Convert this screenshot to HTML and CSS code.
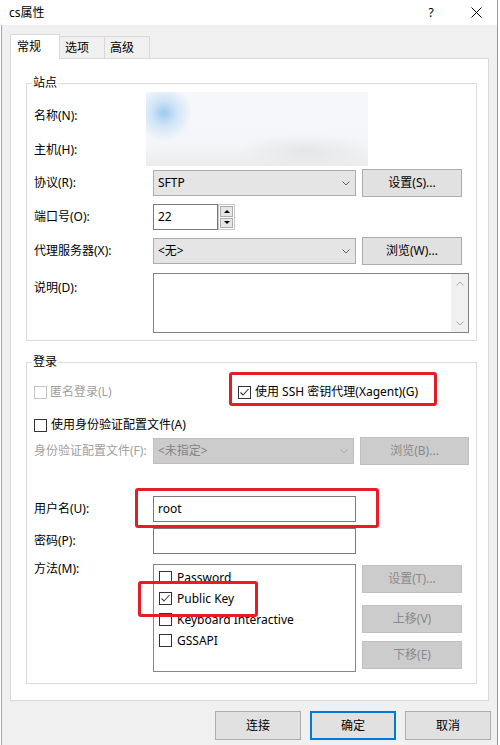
FILE: index.html
```html
<!DOCTYPE html>
<html>
<head>
	<title>cs属性</title>
	<meta charset="utf-8">
	<link rel="stylesheet" href="styles.css">
</head>
<body>
	<div class="window">
		<div class="titlebar">
			<span class="title">cs属性</span>
			<span class="help">?</span>
			<span class="close"><svg width="11" height="11" viewBox="0 0 11 11"><path d="M0.5 0.5L10.5 10.5M10.5 0.5L0.5 10.5" stroke="#000" stroke-width="1" fill="none"/></svg></span>
		</div>
		<div class="client">
			<div class="tabs">
				<div class="tab on">常规</div>
				<div class="tab">选项</div>
				<div class="tab">高级</div>
			</div>
			<div class="panel">
				<!-- 站点 -->
				<div class="group site">
					<div class="group-title">站点</div>
					<div class="site-top">
						<div class="label n1">名称(N):</div>
						<div class="blurred"></div>
						<div class="label n2">主机(H):</div>
					</div>
					<div class="row mt2">
						<div class="label">协议(R):</div>
						<div class="select"><span>SFTP</span><svg width="8" height="5" viewBox="0 0 8 5"><polyline points="0.5,0.5 4,4 7.5,0.5" stroke="#606060" fill="none"/></svg></div>
						<div class="btn">设置(S)...</div>
					</div>
					<div class="row mt6">
						<div class="label">端口号(O):</div>
						<div class="input port">22</div>
						<div class="spin">
							<div class="spin-b"><i class="tri-up"></i></div>
							<div class="spin-b"><i class="tri-down"></i></div>
						</div>
					</div>
					<div class="row mt6">
						<div class="label">代理服务器(X):</div>
						<div class="select"><span>&lt;无&gt;</span><svg width="8" height="5" viewBox="0 0 8 5"><polyline points="0.5,0.5 4,4 7.5,0.5" stroke="#606060" fill="none"/></svg></div>
						<div class="btn">浏览(W)...</div>
					</div>
					<div class="row-top desc-row">
						<div class="label desc-label">说明(D):</div>
						<div class="textarea">
							<div class="vscroll">
								<svg width="8" height="5" viewBox="0 0 8 5"><polyline points="0.5,4.5 4,1 7.5,4.5" stroke="#a6a6a6" fill="none"/></svg>
								<svg width="8" height="5" viewBox="0 0 8 5"><polyline points="0.5,0.5 4,4 7.5,0.5" stroke="#a6a6a6" fill="none"/></svg>
							</div>
						</div>
					</div>
				</div>

				<!-- 登录 -->
				<div class="group login">
					<div class="group-title">登录</div>
					<div class="checks">
						<div class="chk anon disabled"><i class="box"></i>匿名登录(L)</div>
						<div class="chk"><i class="box"><svg width="11" height="11" viewBox="0 0 11 11"><polyline points="1.5,5.5 4,8 9.5,2" stroke="#333" stroke-width="1.1" fill="none"/></svg></i>使用 SSH 密钥代理(Xagent)(G)</div>
					</div>
					<div class="checks mt13">
						<div class="chk"><i class="box"></i>使用身份验证配置文件(A)</div>
					</div>
					<div class="row mt2">
						<div class="label disabled">身份验证配置文件(F):</div>
						<div class="select off"><span>&lt;未指定&gt;</span><svg width="8" height="5" viewBox="0 0 8 5"><polyline points="0.5,0.5 4,4 7.5,0.5" stroke="#a8a8a8" fill="none"/></svg></div>
						<div class="btn off wide">浏览(B)...</div>
					</div>
					<div class="row field mt31">
						<div class="label">用户名(U):</div>
						<div class="input">root</div>
					</div>
					<div class="row field mt6">
						<div class="label">密码(P):</div>
						<div class="input"></div>
					</div>
					<div class="row-top method-row">
						<div class="label method-label">方法(M):</div>
						<div class="listbox">
							<div class="opt"><i class="box"></i>Password</div>
							<div class="opt"><i class="box"><svg width="11" height="11" viewBox="0 0 11 11"><polyline points="1.5,5.5 4,8 9.5,2" stroke="#444" stroke-width="1.1" fill="none"/></svg></i>Public Key</div>
							<div class="opt"><i class="box"></i>Keyboard Interactive</div>
							<div class="opt"><i class="box"></i>GSSAPI</div>
						</div>
						<div class="side-btns">
							<div class="btn off">设置(T)...</div>
							<div class="btn off up">上移(V)</div>
							<div class="btn off down">下移(E)</div>
						</div>
					</div>
				</div>
			</div>
			<div class="actions">
				<div class="btn act">连接</div>
				<div class="btn act default">确定</div>
				<div class="btn act">取消</div>
			</div>
		</div>

		<!-- 标注红框 -->
		<div class="mark m1"></div>
		<div class="mark m2"></div>
		<div class="mark m3"></div>
	</div>
</body>
</html>
```

FILE: styles.css
```css
*{margin: 0;padding: 0;box-sizing: border-box;}
body{background: #fff;font-family: "Noto Sans","Noto Sans CJK SC",sans-serif;font-size: 12px;color: #000;line-height: 16px;}
i{font-style: normal;}
.window{position: relative;width: 498px;height: 745px;border-right: 1px solid #9a9a9a;}

/* 标题栏 */
.titlebar{height: 25px;display: flex;align-items: center;background: #fff;}
.title{flex: 1;padding-left: 9px;}
.help{width: 16px;text-align: center;margin-right: 24px;}
.close{width: 26px;height: 25px;display: flex;align-items: center;justify-content: center;margin-right: 8px;}

.client{height: 720px;margin-left: 1px;border-left: 1px solid #a6a6a6;background: #f0f0f0;padding: 9px 0 0 8px;}

/* 选项卡 */
.tabs{display: flex;height: 24px;position: relative;z-index: 1;}
.tab{width: 46px;height: 22px;margin-top: 2px;border: 1px solid #d9d9d9;border-bottom: 0;background: #f0f0f0;padding-left: 5px;display: flex;align-items: center;}
.tab + .tab{margin-left: -1px;}
.tab.on{width: 50px;height: 25px;margin-top: 0;background: #fff;padding-left: 6px;position: relative;z-index: 2;}

.panel{width: 479px;height: 643px;border: 1px solid #d9d9d9;background: #fff;padding: 24px 0 0 15px;}

/* 分组 */
.group{width: 451px;border: 1px solid #dcdcdc;padding: 0 7px;}
.group-title{width: fit-content;margin: -9px 0 0 -2px;padding: 0 1px;background: #fff;}
.site{padding-bottom: 7px;}
.login{margin-top: 21px;padding-bottom: 11px;}

.label{width: 119px;flex: none;}
.disabled{color: #a0a0a0;}

.site-top{display: grid;grid-template-columns: 119px 1fr;grid-template-rows: 34px 34px;align-items: center;margin-top: 8px;}
.site-top .n1{grid-column: 1;grid-row: 1;}
.site-top .n2{grid-column: 1;grid-row: 2;}
.blurred{grid-column: 2;grid-row: 1 / 3;align-self: start;width: 222px;height: 74px;margin: -7px 0 0 -7px;
	background:
		radial-gradient(circle at 18px 21px, rgba(150,200,240,.95) 0, rgba(180,215,244,.6) 12px, rgba(255,255,255,0) 28px),
		radial-gradient(ellipse 70px 16px at 160px 58px, rgba(205,205,210,.35), rgba(255,255,255,0)),
		linear-gradient(#f6f8fb, #f3f5f8 75%, #ebebeb);}

.row{display: flex;align-items: center;height: 28px;}
.row.field{height: 26px;}
.row-top{display: flex;align-items: flex-start;}
.mt2{margin-top: 2px;}
.mt6{margin-top: 6px;}
.mt13{margin-top: 13px;}
.mt31{margin-top: 31px;}

/* 控件 */
.select{width: 203px;height: 26px;border: 1px solid #acacac;background: #e5e5e5;display: flex;align-items: center;justify-content: space-between;padding: 0 5px 0 4px;}
.select.off{background: #cccccc;border-color: #bfbfbf;color: #838383;}
.btn{width: 100px;height: 28px;margin-left: 6px;border: 1px solid #adadad;background: #e1e1e1;display: flex;align-items: center;justify-content: center;}
.btn.off{background: #cccccc;border-color: #bfbfbf;color: #8a8a8a;}
.btn.wide{width: 110px;}
.input{width: 203px;height: 26px;border: 1px solid #7a7a7a;background: #fff;padding-left: 4px;display: flex;align-items: center;}
.input.port{width: 65px;}
.spin{width: 17px;height: 26px;border: 1px solid #c8c8c8;background: #fff;padding: 1px;display: flex;flex-direction: column;gap: 1px;}
.spin-b{flex: 1;background: #e5e5e5;border: 1px solid #adadad;display: flex;align-items: center;justify-content: center;}
.tri-up{width: 0;height: 0;border-left: 3px solid transparent;border-right: 3px solid transparent;border-bottom: 3px solid #000;}
.tri-down{width: 0;height: 0;border-left: 3px solid transparent;border-right: 3px solid transparent;border-top: 3px solid #000;}

.desc-row{margin-top: 8px;}
.desc-label{padding-top: 7px;}
.textarea{width: 327px;height: 60px;border: 1px solid #828282;background: #fff;display: flex;justify-content: flex-end;}
.vscroll{width: 17px;height: 100%;background: #f0f0f0;display: flex;flex-direction: column;align-items: center;justify-content: space-between;padding: 7px 0 6px;}

/* 复选框 */
.checks{display: flex;align-items: center;height: 20px;margin-top: 12px;}
.checks.mt13{margin-top: 13px;}
.chk{display: flex;align-items: center;gap: 4px;}
.chk.anon{width: 204px;gap: 3px;}
.box{width: 13px;height: 13px;border: 1px solid #333;background: #fff;display: flex;align-items: center;justify-content: center;flex: none;}
.disabled .box{border-color: #c4c4c4;}

.method-row{margin-top: 10px;}
.method-label{margin-top: -3px;}
.listbox{width: 203px;height: 108px;border: 1px solid #828790;background: #fff;padding: 2px 0 0 5px;}
.opt{display: flex;align-items: center;gap: 5px;height: 21px;}
.side-btns{padding-top: 1px;}
.side-btns .up{margin-top: 12px;}
.side-btns .down{margin-top: 8px;}

/* 底部按钮 */
.actions{display: flex;justify-content: flex-end;gap: 9px;margin-top: 10px;padding-right: 6px;}
.btn.act{width: 86px;height: 29px;margin-left: 0;}
.btn.default{border: 2px solid #0078d7;}

/* 红色标注框 */
.mark{position: absolute;border: 3px solid #e81c24;border-radius: 3px;}
.m1{left: 229px;top: 372px;width: 208px;height: 34px;}
.m2{left: 135px;top: 488px;width: 244px;height: 40px;}
.m3{left: 138px;top: 581px;width: 120px;height: 36px;}
```
